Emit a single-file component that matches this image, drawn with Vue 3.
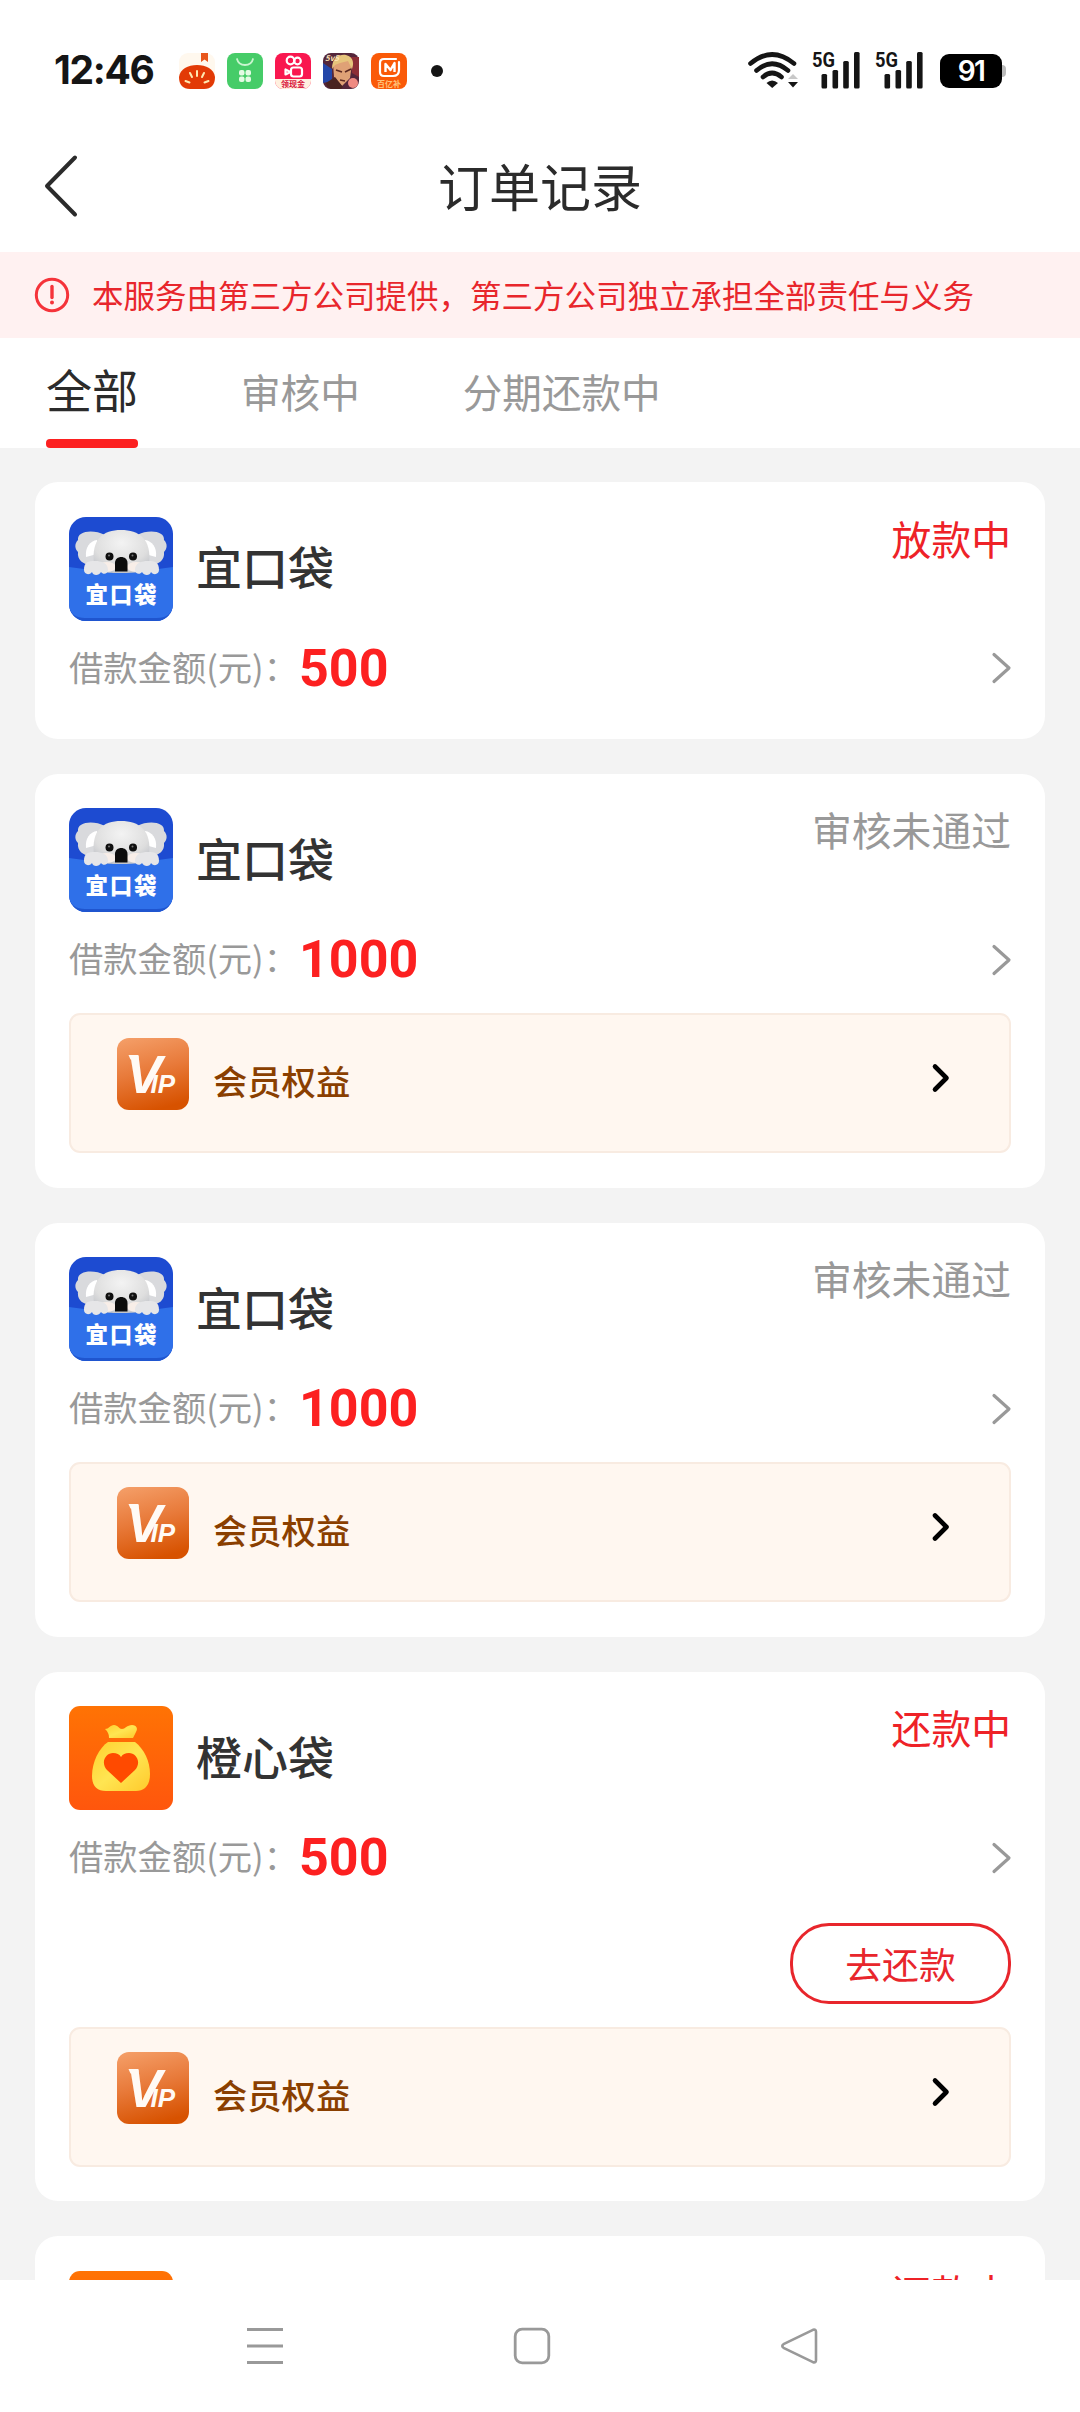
<template>
  <div class="page">
    <!-- system status bar -->
    <div class="status-bar">
      <span class="clock">12:46</span>
      <div class="app-icons">
        <svg class="app-icon" viewBox="0 0 36 36">
          <rect width="36" height="36" rx="9" fill="#fff8ee" />
          <path d="M22 0h7v9l-3.500-2.500L22 9z" fill="#e8561c" />
          <path d="M0 24C1 16 9 12 18 12s17 4 18 12c0 8-4 12-11 12H11C4 36 0 32 0 24z" fill="#e23a06" />
          <path d="M18 18v5M11 20l2 4M25 20l-2 4M6.500 28l4 1.500M29.500 28l-4 1.500" stroke="#ffe9b0" stroke-width="2" stroke-linecap="round" />
        </svg>
        <svg class="app-icon" viewBox="0 0 36 36">
          <rect width="36" height="36" rx="8" fill="#46cc68" />
          <path d="M10 6c2 8 14 8 16 0" fill="none" stroke="#c9f5cf" stroke-width="1.800" stroke-linecap="round" />
          <g fill="#e4fbe4">
            <rect x="12" y="17" width="5.500" height="5.500" rx="2" />
            <rect x="18.500" y="17" width="5.500" height="5.500" rx="2" />
            <rect x="12" y="23.500" width="5.500" height="5.500" rx="2" />
            <rect x="18.500" y="23.500" width="5.500" height="5.500" rx="2" />
          </g>
        </svg>
        <svg class="app-icon" viewBox="0 0 36 36">
          <rect width="36" height="36" rx="8" fill="#f9174f" />
          <path d="M0 26h36v2a8 8 0 0 1-8 8H8a8 8 0 0 1-8-8z" fill="#fff0df" />
          <g fill="none" stroke="#fff" stroke-width="2.200">
            <circle cx="15.500" cy="7.500" r="3.800" />
            <circle cx="22.500" cy="8" r="3.300" />
            <rect x="16" y="14.500" width="11" height="9" rx="2.500" />
            <path d="M15.500 19l-5-2.500v5z" stroke-linejoin="round" />
          </g>
          <text x="18" y="34" class="tiny-text" fill="#d8123c" text-anchor="middle">领现金</text>
        </svg>
        <svg class="app-icon" viewBox="0 0 36 36">
          <rect width="36" height="36" rx="8" fill="#54263a" />
          <path d="M0 10l9 6v12l-9 2z" fill="#2446a8" />
          <path d="M28 4h8v20l-7-4z" fill="#8d2e36" />
          <path d="M10 10c4-8 16-8 19 1l-2 14-8 8-8-9z" fill="#dfa176" />
          <path d="M9 16C9 4 17 1 23 2c8 2 8 9 6 14l-4-8-8 2-5 2z" fill="#e6c47c" />
          <path d="M13 17l6 2M22 19l6-3M17 27l5 1" stroke="#5d2a22" stroke-width="1.600" />
          <path d="M3 30l9-6 8 10-2 2H8a8 8 0 0 1-5-6z" fill="#4a2320" />
          <circle cx="30" cy="30" r="5" fill="#ef8a82" />
          <text x="2" y="8" class="tiny-text italic" fill="#ffe6b8">5v5</text>
        </svg>
        <svg class="app-icon" viewBox="0 0 36 36">
          <rect width="36" height="36" rx="8" fill="#fa5a08" />
          <path d="M25 6H13c-3 0-4 1-4 4v9c0 3 1 4 4 4h9c4 0 6-2 6-6V9" fill="none" stroke="#fff" stroke-width="2.200" stroke-linecap="round" />
          <path d="M14.500 19V11l5 6 4-7v9" fill="none" stroke="#fff" stroke-width="2.400" stroke-linejoin="round" />
          <text x="18" y="33.500" class="tiny-text" fill="#ffc37a" text-anchor="middle">百亿补</text>
        </svg>
      </div>
      <span class="dot"></span>

      <div class="status-right">
        <svg class="wifi" viewBox="0 0 52 36">
          <g fill="none" stroke="#151515" stroke-width="4.600" stroke-linecap="round">
            <path d="M2.500 11.500Q24 -6.500 46 11.500" />
            <path d="M8.500 18.500Q24 5 40 18.500" />
            <path d="M15 25Q24 17 33.500 25" />
          </g>
          <path d="M18.500 31Q24 26 30 31L24.200 36z" fill="#151515" />
          <path d="M40 27l5-5 5 5z" fill="#c8c8c8" />
          <path d="M40 30h10l-5 5.500z" fill="#151515" />
        </svg>
        <svg v-for="n in 2" :key="n" class="signal" viewBox="0 0 50 38">
          <text x="0" y="16" class="signal-text" textLength="23" lengthAdjust="spacingAndGlyphs">5G</text>
          <g fill="#151515">
            <rect x="9.500" y="23" width="5.600" height="14.500" rx="1.500" />
            <rect x="20.500" y="19" width="5.600" height="18.500" rx="1.500" />
            <rect x="31.200" y="10" width="5.600" height="27.500" rx="1.500" />
            <rect x="42" y="1" width="5.600" height="36.500" rx="1.500" />
          </g>
        </svg>
        <div class="battery">91</div>
        <span class="battery-cap"></span>
      </div>
    </div>

    <!-- page title -->
    <div class="header">
      <svg class="back" viewBox="0 0 34 62">
        <path d="M31 2.500L3 31l28 28.500" fill="none" stroke="#2b2b2b" stroke-width="4" stroke-linecap="round" stroke-linejoin="round" />
      </svg>
      <h1 class="title">订单记录</h1>
    </div>

    <div class="notice">
      <svg class="notice-icon" viewBox="0 0 36 36">
        <circle cx="18" cy="18" r="15.700" fill="none" stroke="#f5333a" stroke-width="3" />
        <path d="M18 9.500v11" stroke="#f5333a" stroke-width="3.400" stroke-linecap="round" />
        <circle cx="18" cy="25.500" r="2" fill="#f5333a" />
      </svg>
      <span class="notice-text">本服务由第三方公司提供，第三方公司独立承担全部责任与义务</span>
    </div>

    <div class="tabs">
      <div
        v-for="(tab, index) in tabs"
        :key="tab"
        class="tab"
        :class="{ active: index === activeTab }"
        @click="activeTab = index"
      >
        <span class="tab-text">{{ tab }}</span>
        <span v-if="index === activeTab" class="tab-line"></span>
      </div>
    </div>

    <!-- order list -->
    <div class="list">
      <div v-for="order in orders" :key="order.id" class="card">
        <div class="card-top">
          <svg v-if="order.logo === 'koala'" class="logo koala" viewBox="0 0 104 104">
            <defs>
              <radialGradient id="fur" cx="0.5" cy="0.3" r="0.7">
                <stop offset="0" stop-color="#f3f3f3" />
                <stop offset="0.7" stop-color="#dedede" />
                <stop offset="1" stop-color="#c4c6cb" />
              </radialGradient>
            </defs>
            <path d="M0 50Q52 58 104 50V104H0z" fill="#2f70e9" />
            <path d="M0 90q3 11 16 11h72q13 0 16-11v14H0z" fill="#1f55cf" />
            <path d="M36 18C24 12 8 14 9 23c-4 4-3 9 0 12-1 8 5 12 12 13h15z" fill="#d9dadd" />
            <path d="M68 18c12-6 28-4 27 5 4 4 3 9 0 12 1 8-5 12-12 13H68z" fill="#d9dadd" />
            <path d="M28 23c-7 1-12 7-11 17l11-3z" fill="#fff" />
            <path d="M76 23c7 1 12 7 11 17l-11-3z" fill="#fff" />
            <path d="M25 47C22 22 34 13 52 13s31 9 28 34c-3 9-14 9-28 9s-25 0-27-9z" fill="url(#fur)" />
            <ellipse cx="38" cy="50" rx="9" ry="5" fill="#f8eee8" />
            <ellipse cx="67" cy="50" rx="9" ry="5" fill="#f8eee8" />
            <circle cx="40.500" cy="39.500" r="4" fill="#101010" />
            <circle cx="64" cy="39.500" r="4" fill="#101010" />
            <circle cx="40" cy="38.500" r="1" fill="#777" />
            <circle cx="63.500" cy="38.500" r="1" fill="#777" />
            <path d="M46 54.500V46c0-8 12.500-8 12.500 0v8.500z" fill="#0c0c0c" />
            <path d="M15 53c0-8 4-9 11-9s13 2 13 9c0 4-5 5-7 2-2 4-8 4-9 0-3 4-8 2-8-2z" fill="#e6e6e8" />
            <path d="M66 53c0-7 6-9 13-9s11 1 11 9c0 4-5 6-8 2-1 4-7 4-9 0-2 3-7 2-7-2z" fill="#e6e6e8" />
            <text x="16.500" y="86" class="koala-text" textLength="71">宜口袋</text>
          </svg>
          <svg v-else class="logo bag" viewBox="0 0 104 104">
            <defs>
              <linearGradient id="gold" x1="0" y1="0" x2="1" y2="1">
                <stop offset="0" stop-color="#ffd02e" />
                <stop offset="0.5" stop-color="#ffe552" />
                <stop offset="1" stop-color="#ffc92c" />
              </linearGradient>
            </defs>
            <path d="M36 23c4 0 5-4 9-4s5 4 8 4 5-4 10-4 6 4 4 7l-3 6H40c0-4-1-6-4-9z" fill="url(#gold)" />
            <path d="M39 36h27c9 7 15 19 15 32 0 12-6 17-14 17H37c-9 0-14-5-14-15 0-14 7-28 16-34z" fill="url(#gold)" />
            <path d="M52 77L38 64c-7-8-1-17 6-17 4 0 6 1 8 4 2-3 4-4 8-4 7 0 13 9 6 17z" fill="#ff4a00" />
          </svg>
          <span class="name">{{ order.name }}</span>
          <span class="state" :class="{ red: order.highlight }">{{ order.state }}</span>
        </div>

        <div class="amount-row">
          <span class="label">借款金额(元)：</span>
          <span class="amount">{{ order.amount }}</span>
          <svg class="arrow" viewBox="0 0 20 32">
            <path d="M3 2.500L18 16 3 29.500" fill="none" stroke="#999" stroke-width="3.200" stroke-linecap="round" stroke-linejoin="round" />
          </svg>
        </div>

        <div v-if="order.canRepay" class="repay-row">
          <button class="repay-button">去还款</button>
        </div>

        <div v-if="order.vip" class="vip-box">
          <svg class="vip-icon" viewBox="0 0 72 72">
            <path d="M11.500 17h10v4.500h-8z" fill="#fffaf5" />
            <text x="9" y="55" class="vip-v">V<tspan class="vip-ip" dx="-11.500">IP</tspan></text>
          </svg>
          <span class="vip-text">会员权益</span>
          <svg class="vip-arrow" viewBox="0 0 18 30">
            <path d="M3 3.500L14.500 15 3 26.500" fill="none" stroke="#000" stroke-width="4.600" stroke-linecap="round" stroke-linejoin="round" />
          </svg>
        </div>
      </div>
    </div>

    <!-- system navigation -->
    <div class="nav-bar">
      <svg class="nav-icon" viewBox="0 0 38 38">
        <path d="M1 2.500h36M1 19h36M1 35.500h36" stroke="#999" stroke-width="3" />
      </svg>
      <svg class="nav-icon" viewBox="0 0 38 38">
        <rect x="2.200" y="2.200" width="33.600" height="33.600" rx="7" fill="none" stroke="#999" stroke-width="2.800" />
      </svg>
      <svg class="nav-icon" viewBox="0 0 38 38">
        <path d="M33 2.800L3.500 17.200q-2.500 1.800 0 3.600L33 35.200q3 .8 3-2V4.800q0-2.800-3-2z" fill="none" stroke="#999" stroke-width="2.600" stroke-linejoin="round" />
      </svg>
    </div>
  </div>
</template>

<script setup>
import { ref } from 'vue'

const tabs = ['全部', '审核中', '分期还款中'];
const activeTab = ref(0);

const orders = ref([
  { id: 1, logo: 'koala', name: '宜口袋', state: '放款中', highlight: true, amount: 500, canRepay: false, vip: false },
  { id: 2, logo: 'koala', name: '宜口袋', state: '审核未通过', highlight: false, amount: 1000, canRepay: false, vip: true },
  { id: 3, logo: 'koala', name: '宜口袋', state: '审核未通过', highlight: false, amount: 1000, canRepay: false, vip: true },
  { id: 4, logo: 'bag', name: '橙心袋', state: '还款中', highlight: true, amount: 500, canRepay: true, vip: true },
  { id: 5, logo: 'bag', name: '橙心袋', state: '还款中', highlight: true, amount: 500, canRepay: true, vip: true },
]);
</script>

<style>
body {
  margin: 0;
  background: #fff;
}
</style>

<style scoped>
.page {
  display: flex;
  flex-direction: column;
  width: 1080px;
  height: 2412px;
  overflow: hidden;
  background: #fff;
  font-family: "Noto Sans CJK SC", sans-serif;
}
svg {
  display: block;
  flex-shrink: 0;
  overflow: visible;
}
/* status bar */
.status-bar {
  display: flex;
  align-items: center;
  height: 98px;
  padding: 22px 74px 0 54px;
  flex-shrink: 0;
}
.clock {
  width: 125px;
  margin-top: -2px;
  font-family: Inter, sans-serif;
  font-size: 39px;
  font-weight: 700;
  line-height: 40px;
  letter-spacing: -1.3px;
  color: #151515;
}
.app-icons {
  display: flex;
  gap: 12px;
}
.app-icon {
  width: 36px;
  height: 36px;
}
.tiny-text {
  font-size: 8px;
  font-weight: 700;
}
.italic {
  font-style: italic;
}
.dot {
  width: 12px;
  height: 12px;
  margin-left: 24px;
  border-radius: 50%;
  background: #151515;
}
.status-right {
  display: flex;
  align-items: center;
  margin-left: auto;
}
.wifi {
  width: 52px;
  height: 36px;
  margin: -2px 12px 0 0;
}
.signal {
  width: 50px;
  height: 38px;
  margin: -2px 13px 0 0;
}
.signal-text {
  font-family: Roboto, sans-serif;
  font-size: 21px;
  font-weight: 700;
  fill: #151515;
}
.battery {
  width: 62px;
  height: 34px;
  margin-left: 2px;
  border-radius: 9px;
  background: #000;
  color: #fff;
  font-family: Inter, sans-serif;
  font-size: 28px;
  font-weight: 600;
  line-height: 34px;
  letter-spacing: -1.5px;
  text-align: center;
}
.battery-cap {
  width: 4px;
  height: 12px;
  border-radius: 0 4px 4px 0;
  background: #bbb;
}
/* header */
.header {
  display: flex;
  align-items: center;
  height: 132px;
  padding: 0 44px;
  flex-shrink: 0;
}
.back {
  width: 34px;
  height: 62px;
}
.title {
  flex: 1;
  margin: -2px 34px 0 0;
  font-size: 51px;
  font-weight: 400;
  line-height: 60px;
  text-align: center;
  color: #2b2b2b;
}
/* notice */
.notice {
  display: flex;
  align-items: center;
  gap: 22px;
  height: 86px;
  padding: 0 34px;
  flex-shrink: 0;
  background: #fff1f1;
}
.notice-icon {
  width: 36px;
  height: 36px;
}
.notice-text {
  margin-top: -2px;
  font-size: 31.5px;
  line-height: 40px;
  white-space: nowrap;
  color: #e8262c;
}
/* tabs */
.tabs {
  display: flex;
  gap: 103px;
  height: 110px;
  padding: 0 46px;
  flex-shrink: 0;
}
.tab {
  display: flex;
  flex-direction: column;
  justify-content: space-between;
  font-size: 39.6px;
  line-height: 105px;
  color: #999;
}
.tab.active {
  font-size: 46px;
  line-height: 101px;
  color: #2b2b2b;
}
.tab-line {
  height: 9px;
  border-radius: 4px;
  background: #fc2020;
}
/* list of cards */
.list {
  display: flex;
  flex-direction: column;
  flex: 1;
  gap: 34.9px;
  min-height: 0;
  padding: 34px 35px 0;
  overflow: hidden;
  background: #f3f3f3;
}
.card {
  flex-shrink: 0;
  padding: 34.5px 34px;
  border-radius: 23px;
  background: #fff;
}
.card-top {
  display: flex;
  align-items: center;
  height: 104px;
}
.logo {
  width: 104px;
  height: 104px;
  border-radius: 17px;
  overflow: hidden;
}
.koala {
  background: #1d4bd1;
}
.koala-text {
  font-size: 22.5px;
  font-weight: 900;
  fill: #fff;
}
.bag {
  border-radius: 11px;
  background: linear-gradient(#ff7304, #ff560d);
}
.name {
  margin: -7px 0 0 23px;
  font-size: 46px;
  font-weight: 500;
  line-height: 60px;
  color: #333;
}
.state {
  align-self: flex-start;
  margin: 1px 0 0 auto;
  font-size: 39.8px;
  line-height: 40px;
  color: #999;
}
.state.red {
  color: #ee2227;
}
.amount-row {
  display: flex;
  align-items: center;
  height: 73px;
  margin-top: 11px;
}
.label {
  margin-top: -5px;
  font-size: 34.3px;
  line-height: 40px;
  color: #999;
}
.amount {
  margin: 1px 0 0 1px;
  font-family: Roboto, sans-serif;
  font-size: 52px;
  font-weight: 700;
  line-height: 60px;
  color: #fc2020;
}
.arrow {
  width: 20px;
  height: 32px;
  margin-left: auto;
}
/* repay button */
.repay-row {
  display: flex;
  justify-content: flex-end;
  padding: 28.5px 0 6px;
}
.repay-button {
  width: 221px;
  height: 81px;
  padding: 0;
  border: 3px solid #e8262c;
  border-radius: 39px;
  background: #fff;
  color: #e8262c;
  font-family: inherit;
  font-size: 36.8px;
  line-height: 68px;
}
/* vip box */
.vip-box {
  box-sizing: border-box;
  display: flex;
  height: 140px;
  margin-top: 17px;
  padding: 23px 59px 0 46px;
  border: 2px solid #f8ebe1;
  border-radius: 11px;
  background: #fff7f0;
}
.vip-icon {
  width: 72px;
  height: 72px;
  border-radius: 12px;
  background: linear-gradient(165deg, #f5a06a, #e87a3a 45%, #d75200 90%);
}
.vip-v {
  font-family: "Liberation Sans", sans-serif;
  font-size: 54px;
  font-weight: 700;
  font-style: italic;
  fill: #fffaf5;
}
.vip-ip {
  font-size: 26px;
}
.vip-text {
  margin-left: 24px;
  font-size: 34.3px;
  font-weight: 500;
  line-height: 84px;
  color: #8a3f00;
}
.vip-arrow {
  width: 18px;
  height: 30px;
  margin: 25px 0 0 auto;
}
/* bottom navigation */
.nav-bar {
  display: grid;
  grid-template-columns: repeat(3, 1fr);
  place-items: center;
  height: 132px;
  padding: 0 148px 0 131px;
  flex-shrink: 0;
  background: #fff;
}
.nav-icon {
  width: 38px;
  height: 38px;
}
</style>
